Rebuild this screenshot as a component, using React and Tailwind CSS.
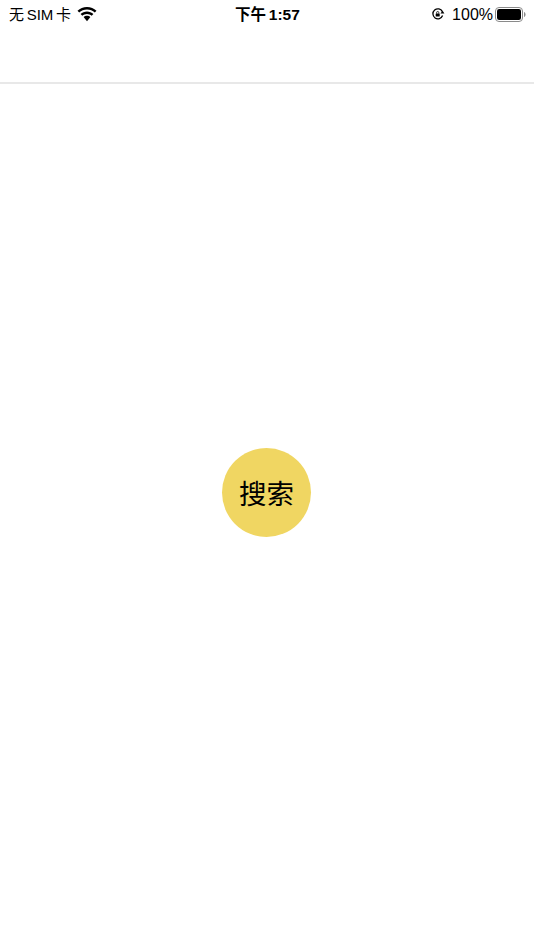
export default function App() {
  return (
    <div className="w-[534px] h-[950px] bg-white flex flex-col text-black overflow-hidden" style={{ fontFamily: '"Liberation Sans", "Noto Sans CJK SC", sans-serif' }}>
      <div className="h-[84px] shrink-0 border-b-2 border-[#e8e8e8]">
        <div className="h-[28px] flex items-center justify-between relative pl-[9px] pr-[7px]">
          <div className="flex items-center gap-[6px]">
            <span className="text-[15px] leading-none [word-spacing:-1.500px] pt-[1px]">无 SIM 卡</span>
            <svg width="20" height="15" viewBox="0 0 20 15" fill="#000">
              <path d="M10 2.600c3 0 5.700 1.100 7.800 3l1.700-1.900C17 1.400 13.700 0 10 0S3 1.400.5 3.700l1.700 1.900c2.100-1.900 4.800-3 7.800-3z" />
              <path d="M10 7c1.800 0 3.400.7 4.700 1.800l1.700-1.900C14.700 5.400 12.500 4.500 10 4.500s-4.700.9-6.400 2.400l1.700 1.900C6.600 7.700 8.200 7 10 7z" />
              <path d="M10 8.800c-1.300 0-2.500.5-3.400 1.300L10 14.200l3.400-4.100c-.9-.8-2.100-1.300-3.400-1.300z" />
            </svg>
          </div>
          <span className="absolute left-[235px] text-[15.500px] font-bold leading-none [word-spacing:-1.500px] pt-[1px]">下午 1:57</span>
          <div className="flex items-center">
            <svg width="14" height="14" viewBox="0 0 14 14" className="mr-[7px]" fill="none">
              <path d="M11.600 8.600A5 5 0 1 1 11.400 4.600" stroke="#000" strokeWidth="1.300" />
              <path d="M13.400 6.600h-4l2.200-2.800z" fill="#000" />
              <rect x="4.700" y="6.400" width="4" height="3.200" rx=".5" fill="#000" />
              <path d="M5.600 6.600V5.600a1.100 1.100 0 0 1 2.200 0v1" stroke="#000" strokeWidth=".8" />
            </svg>
            <span className="text-[16px] leading-none mr-[2px] pt-[1px]">100%</span>
            <svg width="32" height="15" viewBox="0 0 32 15">
              <rect x=".5" y=".5" width="27" height="14" rx="3.500" fill="none" stroke="#8a8a8a" />
              <rect x="2" y="2" width="24" height="11" rx="2.200" fill="#000" />
              <path d="M29 5v5c.9-.3 1.600-1.300 1.600-2.500S29.900 5.300 29 5z" fill="#8a8a8a" />
            </svg>
          </div>
        </div>
      </div>
      <div className="flex-1 flex justify-start pt-[364px] pl-[222px]">
        <button className="w-[89px] h-[89px] rounded-full bg-[#f0d662] text-[27.500px] leading-none text-black flex items-center justify-center pt-[4px]">搜索</button>
      </div>
    </div>
  );
}
